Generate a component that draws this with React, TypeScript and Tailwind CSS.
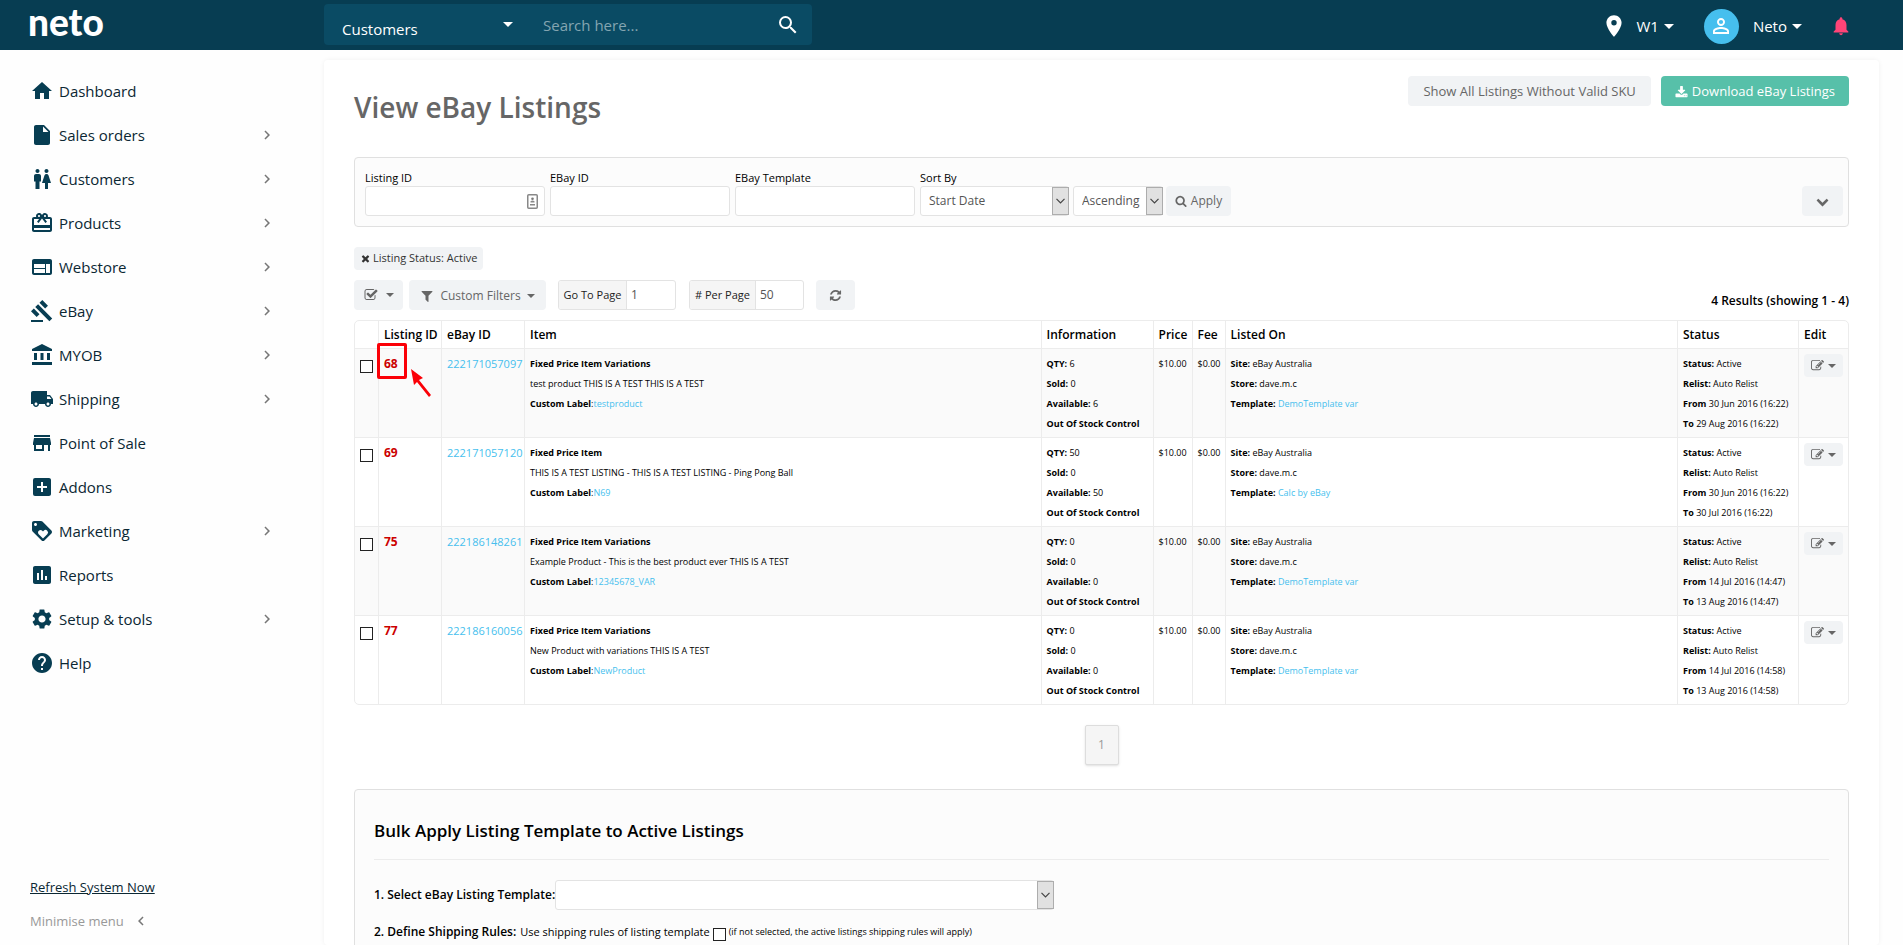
import React from "react";
import {
  MdAccountBalance,
  MdAddBox,
  MdAssessment,
  MdCardGiftcard,
  MdChevronLeft,
  MdChevronRight,
  MdGavel,
  MdHelp,
  MdHome,
  MdInsertDriveFile,
  MdLocalShipping,
  MdLocationOn,
  MdLoyalty,
  MdNotifications,
  MdPersonOutline,
  MdSearch,
  MdSettings,
  MdStore,
  MdWc,
  MdWeb,
} from "react-icons/md";

const menu = [
  { label: "Dashboard", icon: MdHome, more: false },
  { label: "Sales orders", icon: MdInsertDriveFile, more: true },
  { label: "Customers", icon: MdWc, more: true },
  { label: "Products", icon: MdCardGiftcard, more: true },
  { label: "Webstore", icon: MdWeb, more: true },
  { label: "eBay", icon: MdGavel, more: true },
  { label: "MYOB", icon: MdAccountBalance, more: true },
  { label: "Shipping", icon: MdLocalShipping, more: true },
  { label: "Point of Sale", icon: MdStore, more: false },
  { label: "Addons", icon: MdAddBox, more: false },
  { label: "Marketing", icon: MdLoyalty, more: true },
  { label: "Reports", icon: MdAssessment, more: false },
  { label: "Setup & tools", icon: MdSettings, more: true },
  { label: "Help", icon: MdHelp, more: false },
];

const listings = [
  {
    id: "68",
    ebayId: "222171057097",
    type: "Fixed Price Item Variations",
    title: "test product THIS IS A TEST THIS IS A TEST",
    sku: "testproduct",
    qty: 6,
    template: "DemoTemplate var",
    from: "30 Jun 2016 (16:22)",
    to: "29 Aug 2016 (16:22)",
    marked: true,
  },
  {
    id: "69",
    ebayId: "222171057120",
    type: "Fixed Price Item",
    title: "THIS IS A TEST LISTING - THIS IS A TEST LISTING - Ping Pong Ball",
    sku: "N69",
    qty: 50,
    template: "Calc by eBay",
    from: "30 Jun 2016 (16:22)",
    to: "30 Jul 2016 (16:22)",
    marked: false,
  },
  {
    id: "75",
    ebayId: "222186148261",
    type: "Fixed Price Item Variations",
    title: "Example Product - This is the best product ever THIS IS A TEST",
    sku: "12345678_VAR",
    qty: 0,
    template: "DemoTemplate var",
    from: "14 Jul 2016 (14:47)",
    to: "13 Aug 2016 (14:47)",
    marked: false,
  },
  {
    id: "77",
    ebayId: "222186160056",
    type: "Fixed Price Item Variations",
    title: "New Product with variations THIS IS A TEST",
    sku: "NewProduct",
    qty: 0,
    template: "DemoTemplate var",
    from: "14 Jul 2016 (14:58)",
    to: "13 Aug 2016 (14:58)",
    marked: false,
  },
];

const glyphs = {
  check:
    "M1472 930v318q0 119-84.5 203.5t-203.5 84.5h-832q-119 0-203.5-84.5t-84.5-203.5v-832q0-119 84.5-203.5t203.5-84.5h832q63 0 117 25 15 7 18 23 3 17-9 29l-49 49q-10 10-23 10-3 0-9-2-23-6-45-6h-832q-66 0-113 47t-47 113v832q0 66 47 113t113 47h832q66 0 113-47t47-113v-254q0-13 9-22l64-64q10-10 23-10 6 0 12 3 20 8 20 29zm231-489l-814 814q-24 24-57 24t-57-24l-430-430q-24-24-24-57t24-57l110-110q24-24 57-24t57 24l263 263 647-647q24-24 57-24t57 24l110 110q24 24 24 57t-24 57z",
  edit: "M888 1184l116-116-152-152-116 116v56h96v96h56zm440-720q-16-16-33 1l-350 350q-17 17-1 33t33-1l350-350q17-17 1-33zm80 594v190q0 119-84.5 203.5t-203.5 84.5h-832q-119 0-203.5-84.5t-84.5-203.5v-832q0-119 84.5-203.5t203.5-84.5h832q63 0 117 25 15 7 18 23 3 17-9 29l-49 49q-14 14-32 8-23-6-45-6h-832q-66 0-113 47t-47 113v832q0 66 47 113t113 47h832q66 0 113-47t47-113v-126q0-13 9-22l64-64q15-15 35-7t20 29zm-96-738l288 288-672 672h-288v-288zm444 132l-92 92-288-288 92-92q28-28 68-28t68 28l152 152q28 28 28 68t-28 68z",
  refresh:
    "M1639 1056q0 5-1 7-64 268-268 434.5t-478 166.5q-146 0-282.5-55t-243.5-157l-129 129q-19 19-45 19t-45-19-19-45v-448q0-26 19-45t45-19h448q26 0 45 19t19 45-19 45l-137 137q71 66 161 102t187 36q134 0 250-65t186-179q11-17 53-117 8-23 30-23h192q13 0 22.5 9.5t9.5 22.5zm25-800v448q0 26-19 45t-45 19h-448q-26 0-45-19t-19-45 19-45l138-138q-148-137-349-137-134 0-250 65t-186 179q-11 17-53 117-8 23-30 23h-199q-13 0-22.5-9.5t-9.5-22.5v-7q65-268 270-434.5t480-166.5q146 0 284 55.5t245 156.5l130-129q19-19 45-19t45 19 19 45z",
  times:
    "M1490 1322q0 40-28 68l-136 136q-28 28-68 28t-68-28l-294-294-294 294q-28 28-68 28t-68-28l-136-136q-28-28-28-68t28-68l294-294-294-294q-28-28-28-68t28-68l136-136q28-28 68-28t68 28l294 294 294-294q28-28 68-28t68 28l136 136q28 28 28 68t-28 68l-294 294 294 294q28 28 28 68z",
  filter:
    "M1595 295q17 41-14 70l-493 493v742q0 42-39 59-13 5-25 5-27 0-45-19l-256-256q-19-19-19-45v-486l-493-493q-31-29-14-70 17-39 59-39h1280q42 0 59 39z",
  chevron:
    "M1683 808l-742 741q-19 19-45 19t-45-19l-742-741q-19-19-19-45.5t19-45.5l166-165q19-19 45-19t45 19l531 531 531-531q19-19 45-19t45 19l166 165q19 19 19 45.5t-19 45.5z",
  download:
    "M1344 1344q0-26-19-45t-45-19-45 19-19 45 19 45 45 19 45-19 19-45zm256 0q0-26-19-45t-45-19-45 19-19 45 19 45 45 19 45-19 19-45zm128-224v320q0 40-28 68t-68 28h-1472q-40 0-68-28t-28-68v-320q0-40 28-68t68-28h465l135 136q58 56 136 56t136-56l136-136h464q40 0 68 28t28 68zm-325-569q17 41-14 70l-448 448q-18 19-45 19t-45-19l-448-448q-31-29-14-70 17-39 59-39h256v-448q0-26 19-45t45-19h256q26 0 45 19t19 45v448h256q42 0 59 39z",
  search:
    "M1216 832q0-185-131.5-316.5t-316.5-131.5-316.5 131.5-131.5 316.5 131.5 316.5 316.5 131.5 316.5-131.5 131.5-316.5zm512 832q0 52-38 90t-90 38q-54 0-90-38l-343-342q-179 124-399 124-143 0-273.5-55.5t-225-150-150-225-55.5-273.5 55.5-273.5 150-225 225-150 273.5-55.5 273.5 55.5 225 150 150 225 55.5 273.5q0 220-124 399l343 343q37 37 37 90z",
};

const Glyph = ({ name, className }: { name: keyof typeof glyphs; className: string }) => (
  <svg viewBox="0 0 1792 1792" fill="currentColor" aria-hidden="true" className={className}>
    <path d={glyphs[name]} />
  </svg>
);

const Caret = ({ className = "w-2" }: { className?: string }) => (
  <svg viewBox="0 0 10 5" fill="currentColor" aria-hidden="true" className={className}>
    <path d="M0 0h10L5 5z" />
  </svg>
);

const SelectArrow = () => (
  <span className="pointer-events-none absolute inset-y-px right-0 flex w-[17px] items-center justify-center border border-[#adadad] bg-[#e1e1e1]">
    <svg viewBox="0 0 9 6" fill="none" stroke="#444" strokeWidth="1.2" aria-hidden="true" className="w-[9px]">
      <path d="M.5 .8l4 4 4-4" />
    </svg>
  </span>
);

const fieldClass = "h-[30px] rounded-[3px] border border-[#e3e3e3] bg-white text-[#555] outline-none";
const buttonClass = "flex h-[30px] items-center justify-center rounded bg-[#f1f3f5] text-[#666]";
const checkboxClass = "block size-[13px] shrink-0 appearance-none border border-[#222] bg-white";

const Header = () => (
  <header className="flex h-[50px] shrink-0 items-center bg-[#073d52] text-[15px] text-white">
    <a href="#" className="w-[324px] shrink-0 pb-[6px] pl-7 font-['Lato',sans-serif] text-[37px] leading-11 font-black">
      neto
    </a>
    <form className="mb-px flex h-[41px] w-[488px] items-center rounded bg-[#0a4b64]">
      <label className="relative flex h-full w-[204px] items-center">
        <select aria-label="Search in" className="h-full w-full appearance-none pt-[10px] pl-[18px] outline-none">
          <option>Customers</option>
        </select>
        <Caret className="pointer-events-none absolute right-[15px] w-[10px]" />
      </label>
      <input aria-label="Search" placeholder="Search here..." className="h-full min-w-0 flex-1 pl-[15px] outline-none placeholder:text-[#84a5b1]" />
      <button type="submit" aria-label="Submit search" className="mr-3">
        <MdSearch className="size-6" />
      </button>
    </form>
    <div className="ml-auto flex items-center pt-[2px] pr-[51px]">
      <button className="flex items-center gap-[5px]">
        <MdLocationOn className="mr-1 size-[26px]" />
        W1
        <Caret className="w-[10px]" />
      </button>
      <button className="ml-[30px] flex items-center gap-[5px]">
        <span className="mr-[9px] flex size-[35px] items-center justify-center rounded-full bg-[#46bfee]">
          <MdPersonOutline className="size-6" />
        </span>
        Neto
        <Caret className="w-[10px]" />
      </button>
      <button aria-label="Notifications" className="ml-7 text-[#ff4477]">
        <MdNotifications className="size-[22px]" />
      </button>
    </div>
  </header>
);

const Sidebar = () => (
  <aside className="flex w-[324px] shrink-0 flex-col pt-[19px] pb-[14px]">
    <nav>
      {menu.map(({ label, icon: Icon, more }) => (
        <a key={label} href="#" className="flex h-11 items-center pr-12 pl-[30px] text-[15px] text-[#0b2733]">
          <Icon className="mr-[5px] size-6 text-[#073d52]" />
          {label}
          {more && <MdChevronRight className="ml-auto size-[18px] text-[#777]" />}
        </a>
      ))}
    </nav>
    <div className="mt-auto flex flex-col items-start gap-[14px] pl-[30px] text-[13px] leading-5">
      <a href="#" className="text-[#0b2733] underline">
        Refresh System Now
      </a>
      <button className="flex items-center gap-2 text-[#999]">
        Minimise menu
        <MdChevronLeft className="size-[18px] text-[#777]" />
      </button>
    </div>
  </aside>
);

const FilterPanel = () => (
  <form className="mt-[30px] flex h-[70px] items-end rounded border border-[#e0e0e0] bg-[#fcfcfc] pr-[5px] pb-[10px] pl-[10px] text-xs text-black">
    <label className="mr-[5px] flex w-[180px] flex-col">
      <span className="text-[11px] leading-4">Listing ID</span>
      <span className="relative flex items-center">
        <input className={`${fieldClass} w-full px-2`} />
        <svg viewBox="0 0 11 15" aria-hidden="true" className="absolute right-[7px] w-[11px]">
          <rect x=".75" y=".75" width="9.5" height="13.5" rx="1" fill="#fff" stroke="#888" strokeWidth="1.5" />
          <circle cx="5.5" cy="4.8" r="1.3" fill="#777" />
          <path d="M3.5 8.5h4v-1.2q-2-1.6-4 0zM3 10h5v1.5H3z" fill="#888" />
        </svg>
      </span>
    </label>
    <label className="mr-[5px] flex w-[180px] flex-col">
      <span className="text-[11px] leading-4">EBay ID</span>
      <input className={`${fieldClass} px-2`} />
    </label>
    <label className="mr-[5px] flex w-[180px] flex-col">
      <span className="text-[11px] leading-4">EBay Template</span>
      <input className={`${fieldClass} px-2`} />
    </label>
    <label className="mr-1 flex w-[149px] flex-col">
      <span className="text-[11px] leading-4">Sort By</span>
      <span className="relative">
        <select className={`${fieldClass} w-full appearance-none pl-2`}>
          <option>Start Date</option>
        </select>
        <SelectArrow />
      </span>
    </label>
    <label className="relative mr-[3px] w-[90px]">
      <select aria-label="Sort direction" className={`${fieldClass} w-full appearance-none pl-2`}>
        <option>Ascending</option>
      </select>
      <SelectArrow />
    </label>
    <button type="button" className={`${buttonClass} w-[65px] gap-1`}>
      <Glyph name="search" className="size-3" />
      Apply
    </button>
    <button type="button" aria-label="More filters" className={`${buttonClass} ml-auto w-[41px]`}>
      <Glyph name="chevron" className="size-[13px]" />
    </button>
  </form>
);

const Toolbar = () => (
  <div className="mt-[10px] flex h-[30px] items-center text-xs">
    <button aria-label="Select listings" className={`${buttonClass} w-[49px] gap-2`}>
      <Glyph name="check" className="size-[14px]" />
      <Caret />
    </button>
    <button className={`${buttonClass} ml-[6px] w-[137px] gap-[6px] pt-px`}>
      <Glyph name="filter" className="size-[14px]" />
      Custom Filters
      <Caret />
    </button>
    <label className="ml-3 flex h-[30px] w-[118px] overflow-hidden rounded-[3px] border border-[#e3e3e3] text-[#222]">
      <span className="flex w-[68px] shrink-0 items-center justify-center border-r border-[#e3e3e3] bg-[#f5f5f5] text-[11px] whitespace-nowrap">Go To Page</span>
      <input defaultValue="1" className="min-w-0 flex-1 px-1 text-[#555] outline-none" />
    </label>
    <label className="ml-[13px] flex h-[30px] w-[115px] overflow-hidden rounded-[3px] border border-[#e3e3e3] text-[#222]">
      <span className="flex w-[66px] shrink-0 items-center justify-center border-r border-[#e3e3e3] bg-[#f5f5f5] text-[11px] whitespace-nowrap"># Per Page</span>
      <input defaultValue="50" className="min-w-0 flex-1 px-1 text-[#555] outline-none" />
    </label>
    <button aria-label="Refresh" className={`${buttonClass} ml-3 w-[39px]`}>
      <Glyph name="refresh" className="size-[13px]" />
    </button>
    <strong className="mt-3 ml-auto font-semibold text-black">4 Results (showing 1 - 4)</strong>
  </div>
);

const Marker = () => (
  <span aria-hidden="true" className="pointer-events-none absolute -top-[6px] -left-[2px] z-10 flex">
    <span className="h-9 w-[30px] shrink-0 rounded-[2px] border-3 border-[#fb0007]" />
    <svg viewBox="0 0 20 28" fill="#fb0007" className="mt-[26px] ml-1 w-5 shrink-0">
      <path d="M0 0l12 9-4 2 12 15-2 2L6 13l-3 3z" />
    </svg>
  </span>
);

const head = "h-7 border-b border-l border-[#ececec] px-[5px] font-semibold first:border-l-0";
const cell = "border-l border-[#ececec] px-[5px] pt-[5px] pb-[3px] first:border-l-0";

const ListingsTable = () => (
  <div className="mt-[10px] rounded-[5px] border border-[#ececec]">
    <table className="w-full table-fixed border-separate border-spacing-0 text-[9px] leading-5 whitespace-nowrap text-black">
      <colgroup>
        <col className="w-[23px]" />
        <col className="w-[63px]" />
        <col className="w-[83px]" />
        <col className="w-[34.6%]" />
        <col className="w-[112px]" />
        <col className="w-[39px]" />
        <col className="w-[33px]" />
        <col />
        <col className="w-[121px]" />
        <col className="w-[50px]" />
      </colgroup>
      <thead className="text-left text-xs">
        <tr>
          <th className={head} aria-label="Select" />
          <th className={head}>Listing ID</th>
          <th className={head}>eBay ID</th>
          <th className={head}>Item</th>
          <th className={head}>Information</th>
          <th className={head}>Price</th>
          <th className={head}>Fee</th>
          <th className={head}>Listed On</th>
          <th className={head}>Status</th>
          <th className={head}>Edit</th>
        </tr>
      </thead>
      <tbody className="[&_b]:font-bold [&_td]:border-b [&_tr:last-child_td]:border-b-0">
        {listings.map((row) => (
          <tr key={row.id} className="align-top odd:bg-[#fafafa]">
            <td className={cell}>
              <input type="checkbox" aria-label={`Select listing ${row.id}`} className={`${checkboxClass} mt-[6px]`} />
            </td>
            <td className={`${cell} relative text-xs leading-5 font-bold text-[#cc0000]`}>
              {row.id}
              {row.marked && <Marker />}
            </td>
            <td className={`${cell} text-[11px] leading-5`}>
              <a href="#" className="text-[#46bfee]">
                {row.ebayId}
              </a>
            </td>
            <td className={cell}>
              <b>{row.type}</b>
              <br />
              {row.title}
              <br />
              <b>Custom Label</b>:
              <a href="#" className="text-[#46bfee]">
                {row.sku}
              </a>
            </td>
            <td className={cell}>
              <b>QTY:</b> {row.qty}
              <br />
              <b>Sold:</b> 0
              <br />
              <b>Available:</b> {row.qty}
              <br />
              <b>Out Of Stock Control</b>
            </td>
            <td className={cell}>$10.00</td>
            <td className={cell}>$0.00</td>
            <td className={cell}>
              <b>Site:</b> eBay Australia
              <br />
              <b>Store:</b> dave.m.c
              <br />
              <b>Template:</b>{" "}
              <a href="#" className="text-[#46bfee]">
                {row.template}
              </a>
            </td>
            <td className={cell}>
              <b>Status:</b> Active
              <br />
              <b>Relist:</b> Auto Relist
              <br />
              <b>From</b> {row.from}
              <br />
              <b>To</b> {row.to}
            </td>
            <td className={cell}>
              <button aria-label={`Edit listing ${row.id}`} className="flex h-[23px] w-[39px] items-center justify-center gap-1 rounded bg-[#f1f3f5] text-[#666]">
                <Glyph name="edit" className="size-[13px]" />
                <Caret />
              </button>
            </td>
          </tr>
        ))}
      </tbody>
    </table>
  </div>
);

const BulkPanel = () => (
  <section className="mt-6 h-72 rounded border border-[#e0e0e0] bg-[#fcfcfc] px-[19px] pt-[27px] text-xs text-black">
    <h2 className="border-b border-[#ececec] pb-[14px] text-[17px] leading-7 font-semibold">Bulk Apply Listing Template to Active Listings</h2>
    <label className="mt-[20px] flex items-center">
      <span className="font-semibold">1. Select eBay Listing Template:</span>
      <span className="relative w-[499px]">
        <select className={`${fieldClass} block w-full appearance-none`} />
        <SelectArrow />
      </span>
    </label>
    <div className="mt-3 flex items-center leading-5">
      <span className="mr-1 font-semibold">2. Define Shipping Rules:</span>
      <label htmlFor="template-rules" className="text-[11px]">
        Use shipping rules of listing template
      </label>
      <input id="template-rules" type="checkbox" className={`${checkboxClass} mx-[3px] mt-1`} />
      <span className="text-[9px]">(if not selected, the active listings shipping rules will apply)</span>
    </div>
  </section>
);

const App = () => {
  return (
    <div className="flex h-screen flex-col overflow-hidden bg-[#fefefe] font-['Open_Sans','Noto_Sans',sans-serif]">
      <Header />
      <div className="flex min-h-0 flex-1">
        <Sidebar />
        <main className="mt-[10px] mr-6 min-w-0 flex-1 rounded bg-white px-[30px] pt-4 shadow-[0_0_5px_rgba(0,0,0,0.06)]">
          <div className="flex items-start gap-[10px] text-[13px]">
            <h1 className="mr-auto pt-[11px] text-[28px] leading-10 font-semibold text-[#666]">View eBay Listings</h1>
            <button className={`${buttonClass} px-[15px] pt-[2px]`}>Show All Listings Without Valid SKU</button>
            <button className="flex h-[30px] items-center gap-1 rounded bg-[#57c0a9] px-[14px] pt-[2px] text-white">
              <Glyph name="download" className="size-[13px]" />
              Download eBay Listings
            </button>
          </div>
          <FilterPanel />
          <button className="mt-5 flex h-[23px] items-center gap-[2px] rounded bg-[#f1f3f5] px-[6px] text-[11px] text-[#333]">
            <Glyph name="times" className="size-[11px]" />
            Listing Status: Active
          </button>
          <Toolbar />
          <ListingsTable />
          <nav aria-label="Pages" className="mt-5 flex justify-center">
            <a href="#" className="flex h-10 w-[34px] items-center justify-center rounded-[2px] border border-[#ddd] bg-[#f5f5f5] text-xs text-[#999] shadow-sm">
              1
            </a>
          </nav>
          <BulkPanel />
        </main>
      </div>
    </div>
  );
};

export default App;
